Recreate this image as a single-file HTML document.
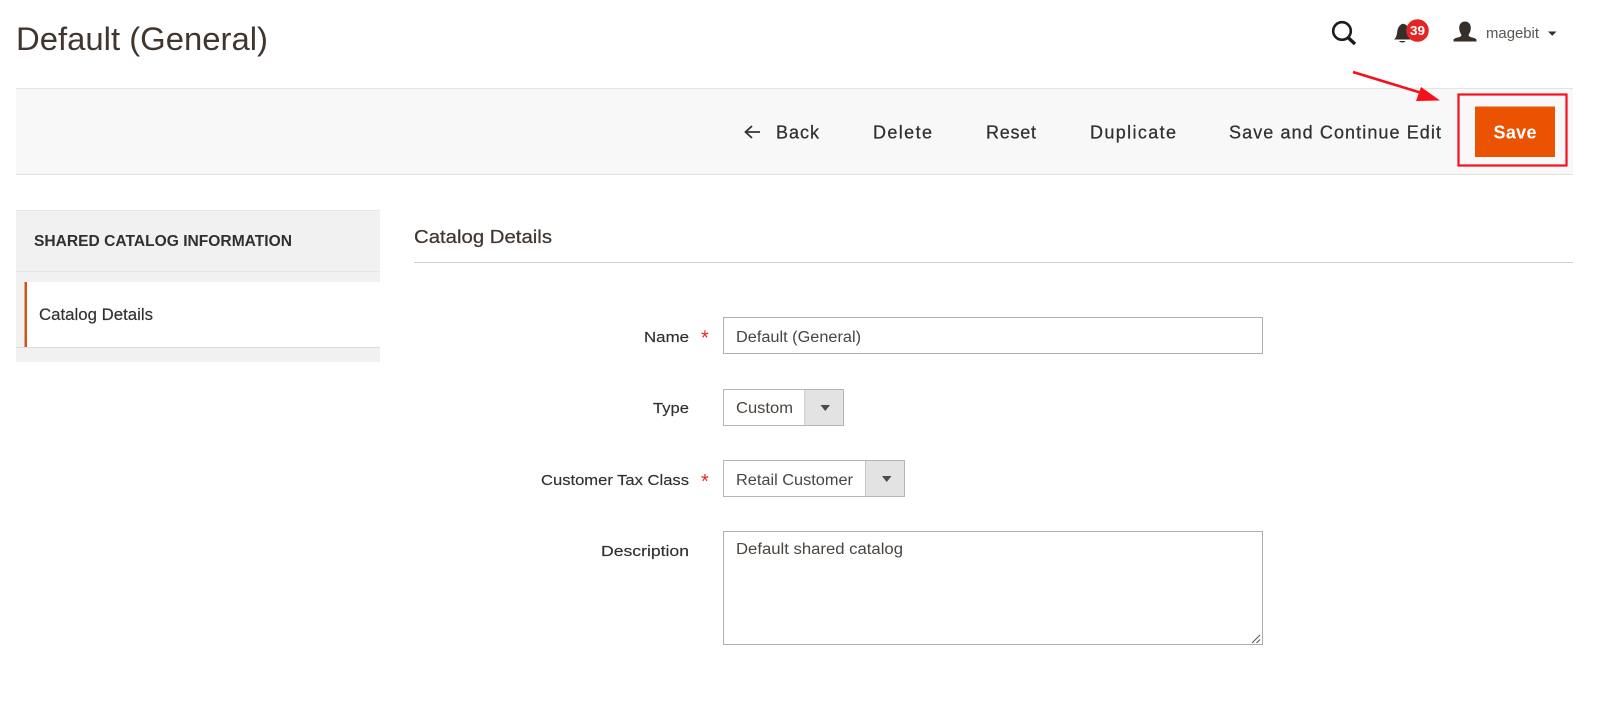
<!DOCTYPE html>
<html><head><meta charset="utf-8"><title>Default (General)</title>
<style>
html,body{margin:0;padding:0;background:#fff;width:1600px;height:714px;overflow:hidden}
svg{display:block}
text{font-family:"Liberation Sans",sans-serif;white-space:pre}
.b{font-size:18px;fill:#303030;stroke:#303030;stroke-width:.25px}
.l{font-size:15px;fill:#303030;stroke:#303030;stroke-width:.15px}
.v{font-size:15.500px;fill:#4a4540}
</style></head><body>
<svg width="1600" height="714" viewBox="0 0 1600 714" xmlns="http://www.w3.org/2000/svg">
<rect width="1600" height="714" fill="#fff"/>
<text x="16" y="50" font-size="32" fill="#41362f" textLength="252" lengthAdjust="spacingAndGlyphs">Default (General)</text>

<!-- search -->
<circle cx="1342" cy="31" r="8.800" fill="none" stroke="#1f1b18" stroke-width="2.600"/>
<path d="M1348 37.500L1355 44" stroke="#1f1b18" stroke-width="3.400" fill="none"/>
<!-- bell -->
<path d="M1394 39.500c2.800-2 2.800-5.500 3.500-9.500.6-3 2.800-5.800 5.500-6.300 2.700.3 5 2.300 5.500 5.300.7 4 1 8.500 3.500 10.500z" fill="#352e29"/>
<path d="M1399 41h6.500c-.5 2-5.500 2-6.500 0z" fill="#352e29"/>
<circle cx="1417.500" cy="30.500" r="11.300" fill="#e22626"/>
<text x="1410" y="35" font-size="13" font-weight="700" fill="#fff" textLength="15" lengthAdjust="spacingAndGlyphs">39</text>
<!-- user -->
<path d="M1465 21.500c3.800 0 5.800 2.800 5.800 6.500 0 2.800-1 5-2.100 6.500v1.500c1.800 1.500 6.800 1.800 7.800 3.500v2h-23v-2c1-1.700 6-2 7.800-3.500v-1.500c-1.100-1.500-2.100-3.700-2.100-6.500 0-3.700 2-6.500 5.800-6.500z" fill="#352e29"/>
<text x="1486" y="38" font-size="14.500" fill="#5a5550" textLength="53" lengthAdjust="spacingAndGlyphs">magebit</text>
<path d="M1548 31.500h8.500l-4.250 4.200z" fill="#332e2a"/>

<!-- toolbar -->
<rect x="16" y="88" width="1557" height="86" fill="#f8f8f8"/>
<rect x="16" y="88" width="1557" height="1" fill="#e3e3e3"/>
<rect x="16" y="174" width="1557" height="1" fill="#e3e3e3"/>
<path d="M760 132H746M752 126L745.500 132L752 138" fill="none" stroke="#3a332e" stroke-width="1.800"/>
<text class="b" x="776" y="138.500" textLength="43" lengthAdjust="spacing">Back</text>
<text class="b" x="873" y="138.500" textLength="59" lengthAdjust="spacing">Delete</text>
<text class="b" x="986" y="138.500" textLength="50" lengthAdjust="spacing">Reset</text>
<text class="b" x="1090" y="138.500" textLength="86" lengthAdjust="spacing">Duplicate</text>
<text class="b" x="1229" y="138.500" textLength="212" lengthAdjust="spacing">Save and Continue Edit</text>
<rect x="1475" y="106.500" width="80" height="50.500" fill="#eb5202"/>
<text x="1493.500" y="138.500" font-size="18" font-weight="700" fill="#fff" textLength="43" lengthAdjust="spacing">Save</text>
<rect x="1458.500" y="94.500" width="108" height="71" fill="none" stroke="#f5101c" stroke-width="2.200"/>
<!-- arrow -->
<path d="M1353 72L1425 94" stroke="#f5101c" stroke-width="2.600" fill="none"/>
<path d="M1440 100.500L1421 87L1416 101z" fill="#f5101c"/>

<!-- sidebar -->
<rect x="16" y="210" width="364" height="152" fill="#f1f1f1"/>
<rect x="16" y="210" width="364" height="1" fill="#e6e6e6"/>
<rect x="16" y="271" width="364" height="1" fill="#e6e6e6"/>
<rect x="25" y="282" width="355" height="65" fill="#fff"/>
<rect x="16" y="347" width="364" height="1" fill="#dcdcdc"/>
<rect x="24.500" y="282" width="2.500" height="65" fill="#d1541b"/>
<text x="34" y="246" font-size="15.500" font-weight="700" fill="#303030" textLength="258" lengthAdjust="spacingAndGlyphs">SHARED CATALOG INFORMATION</text>
<text x="39" y="320" font-size="16.500" fill="#303030" stroke="#303030" stroke-width=".15" textLength="114" lengthAdjust="spacingAndGlyphs">Catalog Details</text>

<!-- heading -->
<text x="414" y="243" font-size="18.500" fill="#41362f" stroke="#41362f" stroke-width=".25" textLength="138" lengthAdjust="spacingAndGlyphs">Catalog Details</text>
<rect x="414" y="262" width="1159" height="1" fill="#cfcfcf"/>

<!-- labels -->
<text class="l" x="644" y="342" textLength="45" lengthAdjust="spacingAndGlyphs">Name</text>
<text class="l" x="653" y="413" textLength="36" lengthAdjust="spacingAndGlyphs">Type</text>
<text class="l" x="541" y="485" textLength="148" lengthAdjust="spacingAndGlyphs">Customer Tax Class</text>
<text class="l" x="601" y="556" textLength="88" lengthAdjust="spacingAndGlyphs">Description</text>
<text x="701" y="344.500" font-size="20" fill="#e22626">*</text>
<text x="701" y="488" font-size="20" fill="#e22626">*</text>

<!-- name input -->
<rect x="723.500" y="317.500" width="539" height="36" fill="#fff" stroke="#adadad"/>
<text class="v" x="736" y="342" textLength="125" lengthAdjust="spacingAndGlyphs">Default (General)</text>

<!-- type select -->
<rect x="723.500" y="389.500" width="120" height="36" fill="#fff" stroke="#b5b5b5"/>
<rect x="804" y="390" width="39" height="35" fill="#e3e3e3"/>
<rect x="804" y="390" width="1" height="35" fill="#d0d0d0"/>
<text class="v" x="736" y="413" textLength="57" lengthAdjust="spacingAndGlyphs">Custom</text>
<path d="M820.500 405h9.500l-4.750 6z" fill="#514943"/>

<!-- tax select -->
<rect x="723.500" y="460.500" width="181" height="36" fill="#fff" stroke="#b5b5b5"/>
<rect x="865" y="461" width="39" height="35" fill="#e3e3e3"/>
<rect x="865" y="461" width="1" height="35" fill="#c8c8c8"/>
<text class="v" x="736" y="485" textLength="117" lengthAdjust="spacingAndGlyphs">Retail Customer</text>
<path d="M882 476h9.500l-4.750 6z" fill="#514943"/>

<!-- textarea -->
<rect x="723.500" y="531.500" width="539" height="113" fill="#fff" stroke="#adadad"/>
<text class="v" x="736" y="554" textLength="167" lengthAdjust="spacingAndGlyphs">Default shared catalog</text>
<path d="M1252 643L1260 635M1256.500 643L1260 639.500" stroke="#555" stroke-width="1" fill="none"/>
</svg>
</body></html>
